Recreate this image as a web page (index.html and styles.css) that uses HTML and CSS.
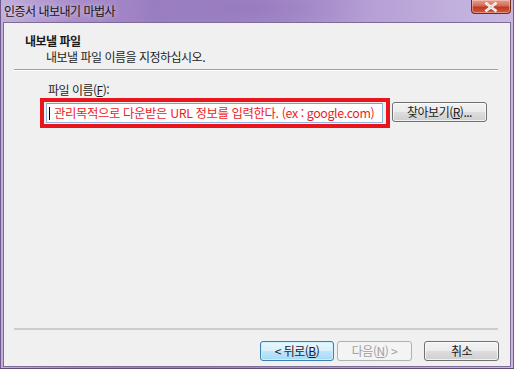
FILE: index.html
```html
<!DOCTYPE html>
<html lang="ko">
<head>
<meta charset="utf-8">
<title>인증서 내보내기 마법사</title>
<link rel="stylesheet" href="styles.css">
</head>
<body>
<div class="window">
  <div class="titlebar">
    <span class="title">인증서 내보내기 마법사</span>
    <div class="close" aria-label="닫기">
      <svg width="14" height="10" viewBox="0 0 14 10"><path d="M2.5 1.5 L11.5 8.5 M11.5 1.5 L2.5 8.5" stroke="#fff" stroke-width="2.6" stroke-linecap="square"/><path d="M2.5 1.5 L11.5 8.5 M11.5 1.5 L2.5 8.5" stroke="#6b2a20" stroke-width="0.6" fill="none" opacity="0.4"/></svg>
    </div>
  </div>
  <div class="client">
    <div class="header">
      <div class="heading">내보낼 파일</div>
      <div class="subheading">내보낼 파일 이름을 지정하십시오.</div>
    </div>
    <div class="sep"></div>
    <div class="body">
      <div class="label">파일 이름(<u>F</u>):</div>
      <div class="row">
        <div class="highlight">
          <div class="input"><span class="caret"></span>관리목적으로 다운받은 URL 정보를 입력한다. (ex : google.com)</div>
        </div>
        <button class="btn browse">찾아보기(<u>R</u>)...</button>
      </div>
    </div>
    <div class="footer">
      <div class="sep sep-light"></div>
      <div class="buttons">
        <button class="btn default">&lt; 뒤로(<u>B</u>)</button>
        <button class="btn disabled">다음(<u>N</u>) &gt;</button>
        <button class="btn cancel">취소</button>
      </div>
    </div>
  </div>
</div>
</body>
</html>
```
FILE: styles.css
```css
html, body {
  margin: 0;
  padding: 0;
}
body {
  width: 514px;
  height: 369px;
  overflow: hidden;
  font-family: "Noto Sans CJK KR", "Noto Sans", sans-serif;
  font-size: 12px;
  letter-spacing: -0.5px;
  color: #1e1e1e;
}
.window {
  width: 514px;
  height: 369px;
  box-sizing: border-box;
  display: flex;
  flex-direction: column;
  background:
    radial-gradient(ellipse 120px 30px at 250px 8px, rgba(140,110,185,0.55), rgba(140,110,185,0) 100%),
    linear-gradient(90deg, #c2aedb 0%, #a98dcb 14%, #9b7fc2 30%, #a68bc9 50%, #b49dd3 70%, #c1afdd 88%, #c9b8e2 100%);
  border-left: 1px solid #6f5a8f;
  border-right: 1px solid #6f5a8f;
  border-bottom: 1px solid #5e4d78;
}
.titlebar {
  height: 22px;
  display: flex;
  justify-content: space-between;
  align-items: flex-start;
  flex: none;
}
.title {
  margin-left: 3px;
  line-height: 22px;
  font-size: 12px;
  color: #151515;
  text-shadow: 0 0 6px rgba(255,255,255,0.7);
}
.close {
  width: 40px;
  height: 14px;
  margin-right: 2px;
  box-sizing: border-box;
  border: 1px solid #6a2c24;
  border-top: none;
  border-radius: 0 0 4px 4px;
  background: linear-gradient(180deg, #e4a091 0%, #d46a56 45%, #c0391f 55%, #cf5b3f 100%);
  box-shadow: inset 0 0 0 1px rgba(255,220,210,0.45);
  display: flex;
  align-items: center;
  justify-content: center;
}
.client {
  flex: 1;
  margin: 0 2px 1px 2px;
  background: #f0f0f0;
  border: 1px solid #7e6c98;
  display: flex;
  flex-direction: column;
}
.header {
  padding: 10px 0 0 21px;
}
.heading {
  font-weight: bold;
  line-height: 16px;
  color: #1a1a1a;
}
.subheading {
  padding-left: 21px;
  line-height: 16px;
}
.sep {
  margin: 4px 12px 0 10px;
  height: 1px;
  background: #a0a0a0;
  border-bottom: 1px solid #ffffff;
}
.sep-light {
  margin-top: 0;
  height: 2px;
  background: #cdcdcd;
  border-bottom: none;
}
.body {
  flex: 1;
  padding-top: 11px;
}
.label {
  padding-left: 44px;
  line-height: 16px;
}
.row {
  display: flex;
  align-items: flex-start;
  padding-left: 36px;
}
.highlight {
  width: 350px;
  height: 30px;
  box-sizing: border-box;
  border: 4px solid #e8151d;
  padding: 1px 3px 0 2px;
}
.input {
  height: 20px;
  box-sizing: border-box;
  border: 1px solid #8fb6dc;
  border-top-color: #7aa2cc;
  background: #ffffff;
  color: #ee1c25;
  font-size: 12.4px;
  letter-spacing: -0.4px;
  line-height: 18px;
  white-space: nowrap;
  overflow: hidden;
  padding-left: 2px;
  display: flex;
  align-items: center;
}
.caret {
  width: 1px;
  height: 13px;
  background: #000;
  margin-right: 4px;
  flex: none;
}
.btn {
  font-family: "Noto Sans CJK KR", "Noto Sans", sans-serif;
  font-size: 12px;
  letter-spacing: -0.5px;
  color: #1a1a1a;
  height: 20px;
  box-sizing: border-box;
  padding: 0;
  line-height: 16px;
  border: 1px solid #707070;
  border-radius: 3px;
  background: linear-gradient(180deg, #f2f2f2 0%, #ebebeb 48%, #dddddd 52%, #cfcfcf 100%);
  box-shadow: inset 0 0 0 1px rgba(255,255,255,0.7);
}
.btn u {
  text-decoration: underline;
  text-underline-offset: 1px;
}
.browse {
  width: 95px;
  margin: 4px 0 0 2px;
}
.footer {
  padding-bottom: 5px;
}
.buttons {
  display: flex;
  justify-content: flex-end;
  padding: 11px 11px 0 0;
}
.default {
  width: 74px;
  border-color: #3c7fb1;
  background: linear-gradient(180deg, #eaf6fd 0%, #d9f0fc 48%, #bee6fd 52%, #a7d9f5 100%);
  box-shadow: inset 0 0 0 1px #c6f1ff;
}
.disabled {
  width: 75px;
  margin-left: 3px;
  color: #a0a0a0;
  border-color: #adb2b5;
  background: #f4f4f4;
  box-shadow: none;
}
.cancel {
  width: 75px;
  margin-left: 12px;
}
```
